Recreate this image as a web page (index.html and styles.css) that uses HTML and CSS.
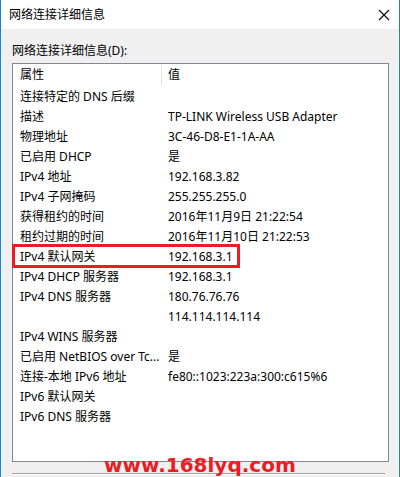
FILE: index.html
```html
<!DOCTYPE html>
<html>
<head>
<meta charset="utf-8">
<meta name="viewport" content="width=device-width, initial-scale=1">
<link rel="stylesheet" href="styles.css">
</head>
<body>

<div class="window">
  <div class="titlebar">
    <span class="title">网络连接详细信息</span>
    <svg class="close" width="12" height="12" viewBox="0 0 12 12">
      <path d="M1 1 L11 11 M11 1 L1 11" stroke="#000" stroke-width="1.1" fill="none"/>
    </svg>
  </div>

  <div class="content">
    <div class="label">网络连接详细信息(D):</div>

    <div class="listbox">
      <div class="row header">
        <div class="col-name">属性</div>
        <div class="col-value">值</div>
      </div>
      <div class="row"><div class="col-name">连接特定的 DNS 后缀</div><div class="col-value"></div></div>
      <div class="row"><div class="col-name">描述</div><div class="col-value">TP-LINK Wireless USB Adapter</div></div>
      <div class="row"><div class="col-name">物理地址</div><div class="col-value">3C-46-D8-E1-1A-AA</div></div>
      <div class="row"><div class="col-name">已启用 DHCP</div><div class="col-value">是</div></div>
      <div class="row"><div class="col-name">IPv4 地址</div><div class="col-value">192.168.3.82</div></div>
      <div class="row"><div class="col-name">IPv4 子网掩码</div><div class="col-value">255.255.255.0</div></div>
      <div class="row"><div class="col-name">获得租约的时间</div><div class="col-value">2016年11月9日 21:22:54</div></div>
      <div class="row"><div class="col-name">租约过期的时间</div><div class="col-value">2016年11月10日 21:22:53</div></div>
      <div class="row"><div class="col-name">IPv4 默认网关</div><div class="col-value">192.168.3.1</div></div>
      <div class="row"><div class="col-name">IPv4 DHCP 服务器</div><div class="col-value">192.168.3.1</div></div>
      <div class="row"><div class="col-name">IPv4 DNS 服务器</div><div class="col-value">180.76.76.76</div></div>
      <div class="row"><div class="col-name"></div><div class="col-value">114.114.114.114</div></div>
      <div class="row"><div class="col-name">IPv4 WINS 服务器</div><div class="col-value"></div></div>
      <div class="row"><div class="col-name">已启用 NetBIOS over Tc...</div><div class="col-value">是</div></div>
      <div class="row"><div class="col-name">连接-本地 IPv6 地址</div><div class="col-value">fe80::1023:223a:300:c615%6</div></div>
      <div class="row"><div class="col-name">IPv6 默认网关</div><div class="col-value"></div></div>
      <div class="row"><div class="col-name">IPv6 DNS 服务器</div><div class="col-value"></div></div>

      <!-- highlight around the gateway row -->
      <div class="mark"></div>
    </div>

    <div class="separator"></div>
  </div>

  <div class="watermark">www.168lyq.com</div>
</div>

</body>
</html>
```

FILE: styles.css
```css
body {
  margin: 0;
  background: #fff;
  font-family: "Noto Sans", "Noto Sans CJK SC", sans-serif;
  font-size: 12px;
  color: #000;
}

.window {
  position: relative;
  width: 398px;
  height: 477px;
  border-left: 1px solid #1883d7;
  border-right: 1px solid #1883d7;
  background: #f0f0f0;
  overflow: hidden;
}

.titlebar {
  display: flex;
  align-items: center;
  justify-content: space-between;
  height: 29px;
  padding: 0 9px 0 8px;
  background: #fff;
}

.title {
  font-size: 12px;
  line-height: 16px;
}

.close {
  display: block;
  margin-top: 1px;
}

.content {
  padding: 14px 10px 0 11px;
}

.label {
  line-height: 16px;
  margin-bottom: 4px;
}

.listbox {
  position: relative;
  height: 397px;
  background: #fff;
  border: 1px solid #828790;
}

.row {
  display: flex;
  height: 20px;
  line-height: 20px;
  white-space: nowrap;
}

.row.header {
  height: 23px;
  line-height: 22px;
}

.col-name {
  width: 141px;
  padding-left: 7px;
  overflow: hidden;
}

.col-value {
  padding-left: 7px;
}

.header .col-name {
  border-right: 1px solid #e5e5e5;
  height: 22px;
}

.header .col-value {
  padding-left: 6px;
}

.mark {
  position: absolute;
  left: -1px;
  top: 180px;
  width: 222px;
  height: 18px;
  border: 3px solid #ec1c24;
}

.separator {
  width: 373px;
  height: 1px;
  margin-top: 11px;
  background: #a0a0a0;
  border-bottom: 1px solid #fff;
}

.watermark {
  position: absolute;
  left: 103px;
  top: 455px;
  font-family: "DejaVu Sans", sans-serif;
  font-weight: bold;
  font-size: 20px;
  line-height: 20px;
  color: #ec1c24;
}
```
